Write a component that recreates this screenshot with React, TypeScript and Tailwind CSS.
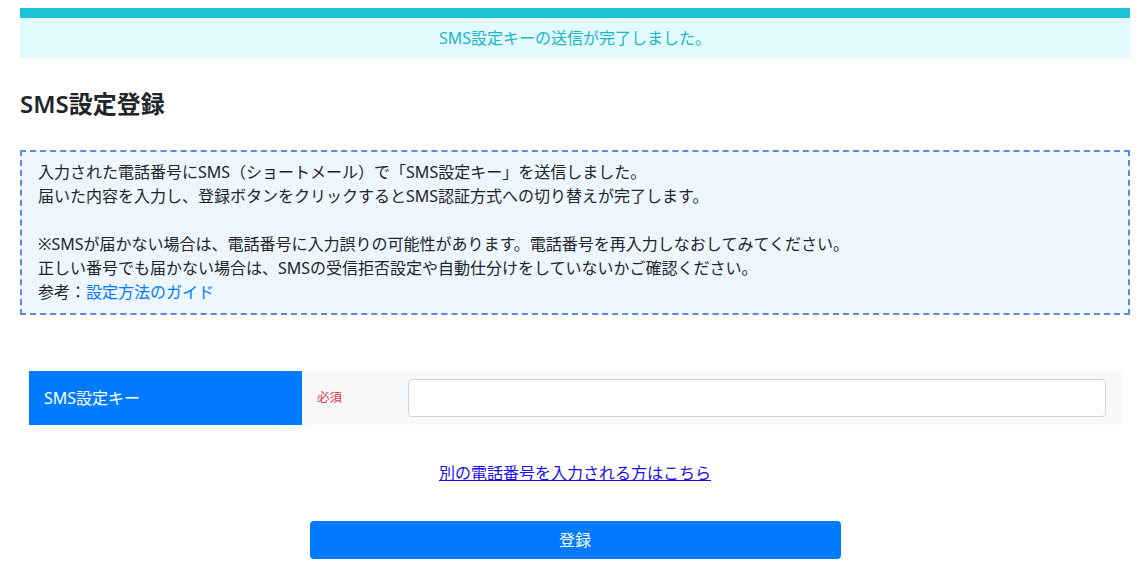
import React from 'react';

const font = { fontFamily: '"Noto Sans", "Noto Sans CJK JP", sans-serif' };

const App: React.FC = () => {
  return (
    <div className="min-h-[582px] bg-white text-[#212529]" style={font}>
      <div className="w-[1110px] ml-[20px] pt-[8px]">
        {/* Alert */}
        <div className="border-t-[10px] border-[#1dc2d6] bg-[#e1fbfe] h-[50px] flex items-center justify-center text-[16px] text-[#1ab5c9]">
          SMS設定キーの送信が完了しました。
        </div>

        <h1 className="mt-[31px] text-[24px] font-semibold leading-[30px] text-[#212529]">SMS設定登録</h1>

        {/* Notice */}
        <div className="mt-[31px] border-2 border-dashed border-[#5b8dd6] bg-[#eef6ff] pl-[16px] pr-4 pt-[8px] pb-[9px] text-[16px] leading-[24px]">
          <p>入力された電話番号にSMS（ショートメール）で「SMS設定キー」を送信しました。</p>
          <p>届いた内容を入力し、登録ボタンをクリックするとSMS認証方式への切り替えが完了します。</p>
          <p className="h-[24px]"></p>
          <p>※SMSが届かない場合は、電話番号に入力誤りの可能性があります。電話番号を再入力しなおしてみてください。</p>
          <p>正しい番号でも届かない場合は、SMSの受信拒否設定や自動仕分けをしていないかご確認ください。</p>
          <p>
            参考：<a href="#" className="text-[#007bff]">設定方法のガイド</a>
          </p>
        </div>

        {/* Form row */}
        <div className="mt-[56px] mx-[9px] flex h-[54px] bg-[#f7f8fa]">
          <div className="w-[273px] bg-[#007bff] text-white text-[16px] flex items-center pl-[15px]">SMS設定キー</div>
          <div className="w-[106px] flex items-center pl-[15px] text-[12.5px] text-[#dc3545]">必須</div>
          <div className="flex-1 flex items-center pr-[15px]">
            <input type="text" className="w-full h-[38px] rounded-[4px] border border-[#ced4da] bg-white px-3 outline-none" />
          </div>
        </div>

        <div className="mt-[36px] text-center text-[16px] leading-[24px]">
          <a href="#" className="underline text-[#1a0dee]">別の電話番号を入力される方はこちら</a>
        </div>

        <div className="mt-[36px] flex justify-center">
          <button className="w-[531px] h-[38px] rounded-[4px] bg-[#007bff] text-white text-[16px]">登録</button>
        </div>
      </div>
    </div>
  );
};

export default App;
